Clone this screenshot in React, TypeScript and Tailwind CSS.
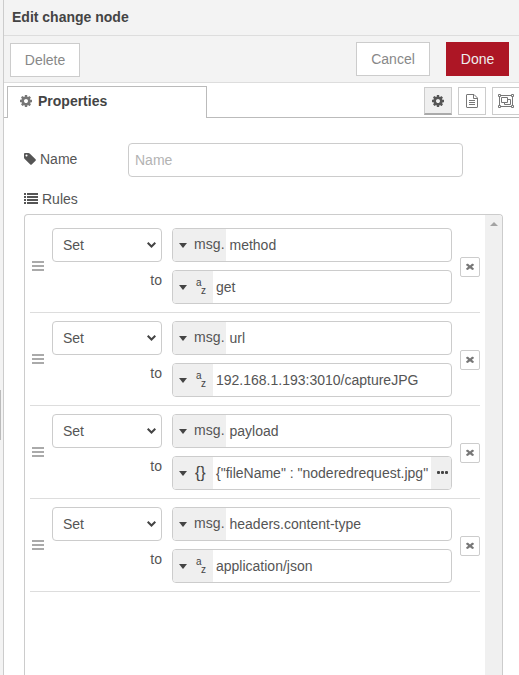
import React from "react";

type Rule = { prop: string; kind: "str" | "json"; value: string };

const rules: Rule[] = [
  { prop: "method", kind: "str", value: "get" },
  { prop: "url", kind: "str", value: "192.168.1.193:3010/captureJPG" },
  { prop: "payload", kind: "json", value: '{"fileName" : "noderedrequest.jpg"' },
  { prop: "headers.content-type", kind: "str", value: "application/json" },
];

function Cog({ className }: { className: string }) {
  return (
    <svg viewBox="128 128 1536 1536" className={className} fill="currentColor">
      <path d="M1152 896q0-106-75-181t-181-75-181 75-75 181 75 181 181 75 181-75 75-181zm512-109v222q0 12-8 23t-20 13l-185 28q-19 54-39 91 35 50 107 138 10 12 10 25t-9 23q-27 37-99 108t-94 71q-12 0-26-9l-138-108q-44 23-91 38-16 136-29 186-7 28-36 28h-222q-14 0-24.5-8.5t-11.5-21.5l-28-184q-49-16-90-37l-141 107q-10 9-25 9-14 0-25-11-126-114-165-168-7-10-7-23 0-12 8-23 15-21 51-66.5t54-70.5q-27-50-41-99l-183-27q-13-2-21-12.5t-8-23.5v-222q0-12 8-23t19-13l186-28q14-46 39-92-40-57-107-138-10-12-10-24 0-10 9-23 26-36 98.5-107.5t94.5-71.5q13 0 26 10l138 107q44-23 91-38 16-136 29-186 7-28 36-28h222q14 0 24.5 8.5t11.5 21.5l28 184q49 16 90 37l142-107q9-9 24-9 13 0 25 10 129 119 165 170 7 8 7 22 0 12-8 23-15 21-51 66.5t-54 70.5q26 50 41 98l183 28q13 2 21 12.5t8 23.5z" />
    </svg>
  );
}

function Tag() {
  return (
    <svg viewBox="128 128 1536 1536" className="h-3 w-3" fill="currentColor">
      <path d="M576 448q0-53-37.5-90.5t-90.5-37.5-90.5 37.5-37.5 90.5 37.5 90.5 90.5 37.5 90.5-37.5 37.5-90.5zm1067 576q0 53-37 90l-491 492q-39 37-91 37-53 0-90-37l-715-716q-38-37-64.5-101t-26.5-117v-416q0-52 38-90t90-38h416q53 0 117 26.5t102 64.5l715 714q37 39 37 91z" />
    </svg>
  );
}

function ListIcon() {
  return (
    <svg viewBox="0 0 14 11" className="mb-[1px] h-[11px] w-[14px]" fill="currentColor" shapeRendering="crispEdges">
      <path d="M0 0h2v2H0zM3 0h11v2H3zM0 3h2v2H0zM3 3h11v2H3zM0 6h2v2H0zM3 6h11v2H3zM0 9h2v2H0zM3 9h11v2H3z" />
    </svg>
  );
}

function FileText() {
  return (
    <svg viewBox="0 0 12 14" className="h-[14px] w-3" fill="none" stroke="currentColor">
      <path d="M.5 1Q.5.5 1 .5H8L11.500 4V13Q11.500 13.500 11 13.500H1Q.5 13.500.5 13ZM7.500.5V4.500H11.500M3 6.500H9M3 8.500H9M3 10.500H9" />
    </svg>
  );
}

function ObjectGroup() {
  return (
    <svg viewBox="0 0 16 14" className="h-[14px] w-4" fill="none" stroke="currentColor">
      <path d="M3 1.500H13M3 12.500H13M1.500 3V11M14.500 3V11M.5.5H2.500V2.500H.5ZM13.500.5H15.500V2.500H13.500ZM.5 11.500H2.500V13.500H.5ZM13.500 11.500H15.500V13.500H13.500ZM3.500 3.500H9.500V8.500H3.500ZM9.500 5.500H12.500V10.500H6.500V8.500" />
    </svg>
  );
}

function Caret() {
  return (
    <svg viewBox="0 0 8 4" className="h-[5px] w-2 shrink-0" preserveAspectRatio="none" fill="#444">
      <path d="M0 0H8L4 4Z" />
    </svg>
  );
}

function Times() {
  return (
    <svg viewBox="302 238 1188 1316" className="mb-[1px] h-[7px] w-2" preserveAspectRatio="none" fill="#777">
      <path d="M1490 1322q0 40-28 68l-136 136q-28 28-68 28t-68-28l-294-294-294 294q-28 28-68 28t-68-28l-136-136q-28-28-28-68t28-68l294-294-294-294q-28-28-28-68t28-68l136-136q28-28 68-28t68 28l294 294 294-294q28-28 68-28t68 28l136 136q28 28 28 68t-28 68l-294 294 294 294q28 28 28 68z" />
    </svg>
  );
}

function TypeIcon({ kind }: { kind: Rule["kind"] }) {
  if (kind === "json") {
    return <span className="ml-2 text-[16px] leading-none text-[#444]">{"{}"}</span>;
  }
  return (
    <span className="ml-[9px] flex h-[18px] text-[10px] leading-[10px] text-[#444]">
      <span className="w-[5px]">a</span>
      <span className="mt-2">z</span>
    </span>
  );
}

function RuleRow({ rule }: { rule: Rule }) {
  return (
    <div className="flex h-[93px] border-b border-[#ddd] pt-2">
      <div className="flex w-[22px] flex-col gap-[2px] pl-[2px] pt-[33px]">
        <div className="h-[2px] w-3 bg-[#aaa]" />
        <div className="h-[2px] w-3 bg-[#aaa]" />
        <div className="h-[2px] w-3 bg-[#aaa]" />
      </div>
      <div className="w-[110px]">
        <div className="flex h-[34px] items-center justify-between rounded-[4px] border border-[#ccc] pl-[10px] pr-[5px]">
          <span>Set</span>
          <svg viewBox="0 0 9 6" className="h-[6px] w-[9px]" fill="none" stroke="#444" strokeWidth="2">
            <path d="M.7.8L4.500 4.500L8.300.8" />
          </svg>
        </div>
        <div className="pt-2 text-right leading-5">to</div>
      </div>
      <div className="ml-[10px] flex w-[280px] flex-col gap-2">
        <div className="flex h-[34px] overflow-hidden rounded-[4px] border border-[#ccc]">
          <div className="flex w-[53px] items-center bg-[#efefef] pl-[6px]">
            <Caret />
            <span className="ml-[7px] pb-[2px] tracking-[0.1px]">msg.</span>
          </div>
          <div className="flex items-center pl-[3.5px]">{rule.prop}</div>
        </div>
        <div className="flex h-[34px] overflow-hidden rounded-[4px] border border-[#ccc]">
          <div className="flex w-10 shrink-0 items-center bg-[#efefef] pl-[6px]">
            <Caret />
            <TypeIcon kind={rule.kind} />
          </div>
          <div className="flex flex-1 items-center whitespace-pre pl-[3px]">{rule.value}</div>
          {rule.kind === "json" && (
            <div className="flex w-5 shrink-0 items-center gap-[1px] bg-[#efefef] pb-[1px] pl-[6px]">
              <div className="h-[3px] w-[3px] rounded-[1px] bg-[#444]" />
              <div className="h-[3px] w-[3px] rounded-[1px] bg-[#444]" />
              <div className="h-[3px] w-[3px] rounded-[1px] bg-[#444]" />
            </div>
          )}
        </div>
      </div>
      <div className="ml-2 mt-[29px] flex h-5 w-5 items-center justify-center rounded-[2px] border border-[#ccc]">
        <Times />
      </div>
    </div>
  );
}

export default function App() {
  return (
    <div className="flex h-[675px] w-[519px] overflow-hidden bg-white font-['Liberation_Sans',Arial,sans-serif] text-[14px] leading-5 text-[#555]">
      <div className="w-1 shrink-0 border-r border-[#ccc] bg-[#f3f3f3] pt-[390px]">
        <div className="h-[50px] w-[1px] bg-[#bbb]" />
      </div>
      <div className="flex w-[515px] shrink-0 flex-col">
        <div className="flex h-9 shrink-0 items-center border-b border-[#ddd] bg-[#f3f3f3] pb-[1px] pl-2 font-bold text-[#444]">
          Edit change node
        </div>
        <div className="flex h-[47px] shrink-0 border-b border-[#ddd] bg-[#f3f3f3] pl-[6px] pt-[6px] text-[#888]">
          <div className="mt-[1px] flex h-[34px] w-[70px] items-center justify-center border border-[#ccc] bg-white">Delete</div>
          <div className="ml-auto flex h-[34px] w-[74px] items-center justify-center border border-[#ccc] bg-white">Cancel</div>
          <div className="ml-4 mr-[10px] flex h-[34px] w-[63px] items-center justify-center bg-[#ad1625] text-[#eee]">Done</div>
        </div>
        <div className="flex h-[35px] shrink-0 pt-[3px]">
          <div className="w-[3px] border-b border-[#bbb]" />
          <div className="flex w-[200px] items-center border-x border-t border-[#bbb] pb-[3px] pl-3 font-bold text-[#444]">
            <span className="mr-[6px] text-[#777]"><Cog className="h-3 w-3" /></span>
            Properties
          </div>
          <div className="flex flex-1 justify-end gap-[6px] border-b border-[#bbb] pt-[1px] text-[#777]">
            <div className="flex h-7 w-7 items-center justify-center border border-b-2 border-[#ccc] border-b-[#aaa] bg-[#efefef] text-[#555]">
              <Cog className="h-3 w-3" />
            </div>
            <div className="flex h-7 w-7 items-center justify-center border border-[#ccc]"><FileText /></div>
            <div className="-mr-[1px] flex h-7 w-7 items-center justify-center border border-[#ccc]"><ObjectGroup /></div>
          </div>
        </div>
        <div className="flex flex-1 flex-col pl-5 pt-[25px]">
          <div className="flex h-[34px]">
            <div className="flex w-[104px] items-center gap-1 pb-[2px]"><Tag />Name</div>
            <div className="flex w-[335px] items-center rounded-[4px] border border-[#ccc] pl-[6px] text-[#b3b3b3]">Name</div>
          </div>
          <div className="mt-3 flex h-5 items-center gap-1"><ListIcon />Rules</div>
          <div className="mt-[5px] flex w-[479px] flex-1 rounded-t-[4px] border border-b-0 border-[#ccc]">
            <div className="w-[460px] p-[5px]">
              {rules.map((rule) => <RuleRow key={rule.prop} rule={rule} />)}
            </div>
            <div className="flex w-[17px] justify-center rounded-tr-[3px] bg-[#f0f0f0] pt-[7px]">
              <svg viewBox="0 0 8 4" className="h-1 w-2" fill="#a3a3a3"><path d="M4 0L8 4H0Z" /></svg>
            </div>
          </div>
        </div>
      </div>
    </div>
  );
}
